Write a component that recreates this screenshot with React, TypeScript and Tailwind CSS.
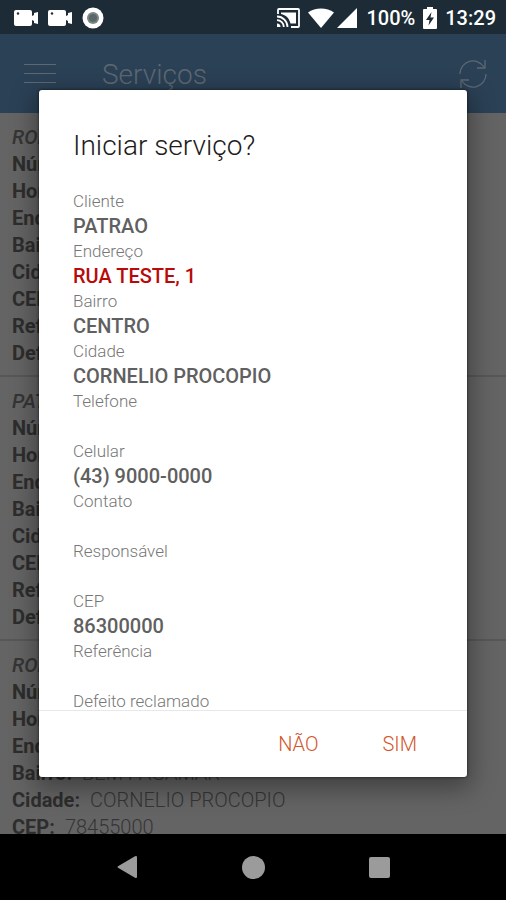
import type { ReactNode } from "react";

type Field = { label: string; value: string; accent?: boolean };
type Service = { name: string; rows: { label: string; value: string }[] };

const fields: Field[] = [
  { label: "Cliente", value: "PATRAO" },
  { label: "Endereço", value: "RUA TESTE, 1", accent: true },
  { label: "Bairro", value: "CENTRO" },
  { label: "Cidade", value: "CORNELIO PROCOPIO" },
  { label: "Telefone", value: "" },
  { label: "Celular", value: "(43) 9000-0000" },
  { label: "Contato", value: "" },
  { label: "Responsável", value: "" },
  { label: "CEP", value: "86300000" },
  { label: "Referência", value: "" },
  { label: "Defeito reclamado", value: "" },
];

const makeRows = (bairro: string, cidade: string, cep: string) => [
  { label: "Número:", value: "" },
  { label: "Horário:", value: "" },
  { label: "Endereço:", value: "" },
  { label: "Bairro:", value: bairro },
  { label: "Cidade:", value: cidade },
  { label: "CEP:", value: cep },
  { label: "Referência:", value: "" },
  { label: "Defeito:", value: "" },
];

const services: Service[] = [
  { name: "RODRIGO", rows: makeRows("", "", "") },
  { name: "PATRAO", rows: makeRows("", "", "") },
  { name: "RODRIGO", rows: makeRows("BEM PAGAMAR", "CORNELIO PROCOPIO", "78455000") },
];

function CameraIcon() {
  return (
    <svg viewBox="0 0 24 18" className="h-[18px] w-6" fill="#fff" aria-hidden="true">
      <rect x="0" y="1" width="18" height="16" rx="2" />
      <path d="M18 7l2-1V4l4-1v12l-4-1v-2l-2-1z" />
      <circle cx="4" cy="4.500" r="1.200" fill="#1c2b35" />
    </svg>
  );
}

function StatusBar() {
  return (
    <header className="flex h-[34px] shrink-0 items-center justify-between bg-[#1c2b35] pl-[14px] pr-[10px] pt-px text-white">
      <div className="flex items-center gap-[10px]">
        <CameraIcon />
        <CameraIcon />
        <svg viewBox="0 0 22 22" className="h-[22px] w-[22px]" aria-hidden="true">
          <circle cx="11" cy="11" r="10.500" fill="#fff" />
          <circle cx="11" cy="11" r="6" fill="#7b8688" />
          <circle cx="11" cy="11" r="4" fill="#5b686a" />
        </svg>
      </div>
      <div className="flex items-center">
        <svg viewBox="0 0 24 20" className="h-5 w-6" aria-hidden="true" fill="none" stroke="#fff" strokeWidth="1.800">
          <path d="M2 6V2q0-1 1-1h19q1 0 1 1v16q0 1-1 1h-7" />
          <path d="M5 4.500h15v11h-5.500C13 10 10 7 5 6z" fill="#fff" stroke="none" />
          <path d="M1 8.500a10.500 10.500 0 0 1 10.500 10.500M1 12.200a6.800 6.800 0 0 1 6.800 6.800" />
          <path d="M1 15.500a3.500 3.500 0 0 1 3.500 3.500H1z" fill="#fff" stroke="none" />
        </svg>
        <svg viewBox="0 0 26 20" className="ml-2 h-5 w-[26px]" fill="#fff" aria-hidden="true">
          <path d="M0 4.500C7-1 19-1 26 4.500L13 20z" />
        </svg>
        <svg viewBox="0 0 20 20" className="ml-[3px] h-5 w-5" fill="#fff" aria-hidden="true">
          <path d="M20 0v20H0z" />
        </svg>
        <span className="ml-[9px] text-[20px] leading-6 font-medium">100%</span>
        <svg viewBox="0 0 14 22" className="ml-2 h-[22px] w-[14px]" aria-hidden="true">
          <path d="M4 0h6v2h3q1 0 1 1v18q0 1-1 1H1q-1 0-1-1V3q0-1 1-1h3z" fill="#fff" />
          <path d="M8.500 5L3 13h3.500L5.500 18.500 11 10.500H7.500z" fill="#1c2b35" />
        </svg>
        <time className="ml-2 text-[20px] leading-6 font-medium">13:29</time>
      </div>
    </header>
  );
}

function AppBar() {
  return (
    <div className="flex h-[79px] items-center bg-[#2b4156] pl-6 pr-[18px] text-[#5d6873]">
      <button type="button" aria-label="Menu" className="flex w-8 flex-col gap-2">
        <span className="h-px w-full bg-current" />
        <span className="h-px w-full bg-current" />
        <span className="h-px w-full bg-current" />
      </button>
      <h1 className="ml-[46px] flex-1 pt-[2px] text-[28px] leading-8 font-light">Serviços</h1>
      <button type="button" aria-label="Atualizar">
        <svg viewBox="0 0 30 30" className="h-[30px] w-[30px]" fill="none" stroke="currentColor" strokeWidth="1.300" aria-hidden="true">
          <path d="M2 15A13 13 0 0 1 26 8M28 15A13 13 0 0 1 4 22" />
          <path d="M27 1v8h-8M3 29v-8h8" />
        </svg>
      </button>
    </div>
  );
}

function ServiceItem({ service }: { service: Service }) {
  return (
    <li className="border-b-2 border-[#575757] pt-[11px] pb-2 pl-3 text-[20px] leading-[27px] text-[#353535]">
      <p className="font-medium italic">{service.name}</p>
      {service.rows.map((row) => (
        <p key={row.label}>
          <strong className="font-bold text-[#2d2d2d]">{row.label}</strong>
          <span className="ml-[10px] font-light">{row.value}</span>
        </p>
      ))}
    </li>
  );
}

function DialogButton({ children }: { children: ReactNode }) {
  return (
    <button type="button" className="text-[20px] leading-6 font-light text-[#d2562a]">
      {children}
    </button>
  );
}

function StartDialog() {
  return (
    <div className="absolute inset-0 flex flex-col px-[39px] pt-14 pb-[57px]">
      <section
        role="dialog"
        aria-labelledby="dialog-title"
        className="flex min-h-0 flex-1 flex-col rounded-[3px] bg-white shadow-[0_8px_24px_4px_rgba(0,0,0,0.35),0_0_3px_rgba(0,0,0,0.7)]"
      >
        <h2 id="dialog-title" className="px-[34px] pt-10 text-[28px] leading-8 font-light text-[#1c1c1c]">
          Iniciar serviço?
        </h2>
        <dl className="mt-[27px] min-h-0 flex-1 overflow-hidden px-[34px]">
          {fields.map((field) => (
            <div key={field.label}>
              <dt className="text-[17px] leading-[25px] font-light text-[#777]">{field.label}</dt>
              <dd className={`h-[25px] text-[20px] leading-[25px] font-medium ${field.accent ? "text-[#b80a0a]" : "text-[#606060]"}`}>
                {field.value}
              </dd>
            </div>
          ))}
        </dl>
        <footer className="flex h-[67px] shrink-0 items-center justify-end gap-16 border-t border-[#e8e8e8] pr-[50px]">
          <DialogButton>NÃO</DialogButton>
          <DialogButton>SIM</DialogButton>
        </footer>
      </section>
    </div>
  );
}

function NavigationBar() {
  return (
    <nav className="flex h-[66px] shrink-0 items-center justify-center gap-[104px] bg-black text-[#9b9b9b]">
      <button type="button" aria-label="Voltar">
        <svg viewBox="0 0 22 22" className="h-[22px] w-[22px]" fill="currentColor" aria-hidden="true">
          <path d="M2 10.200L19 .3q2-.8 2 1v19.400q0 1.800-2 1L2 11.800q-1-.8 0-1.600z" />
        </svg>
      </button>
      <button type="button" aria-label="Início" className="h-[23px] w-[23px] rounded-full bg-current" />
      <button type="button" aria-label="Recentes" className="h-[21px] w-[21px] rounded-[2px] bg-current" />
    </nav>
  );
}

export default function App() {
  return (
    <div className="flex h-screen flex-col overflow-hidden bg-black font-[Roboto,sans-serif]">
      <StatusBar />
      <main className="relative min-h-0 flex-1 overflow-hidden bg-[#646464]">
        <AppBar />
        <ul>
          {services.map((service, index) => (
            <ServiceItem key={index} service={service} />
          ))}
        </ul>
        <StartDialog />
      </main>
      <NavigationBar />
    </div>
  );
}
